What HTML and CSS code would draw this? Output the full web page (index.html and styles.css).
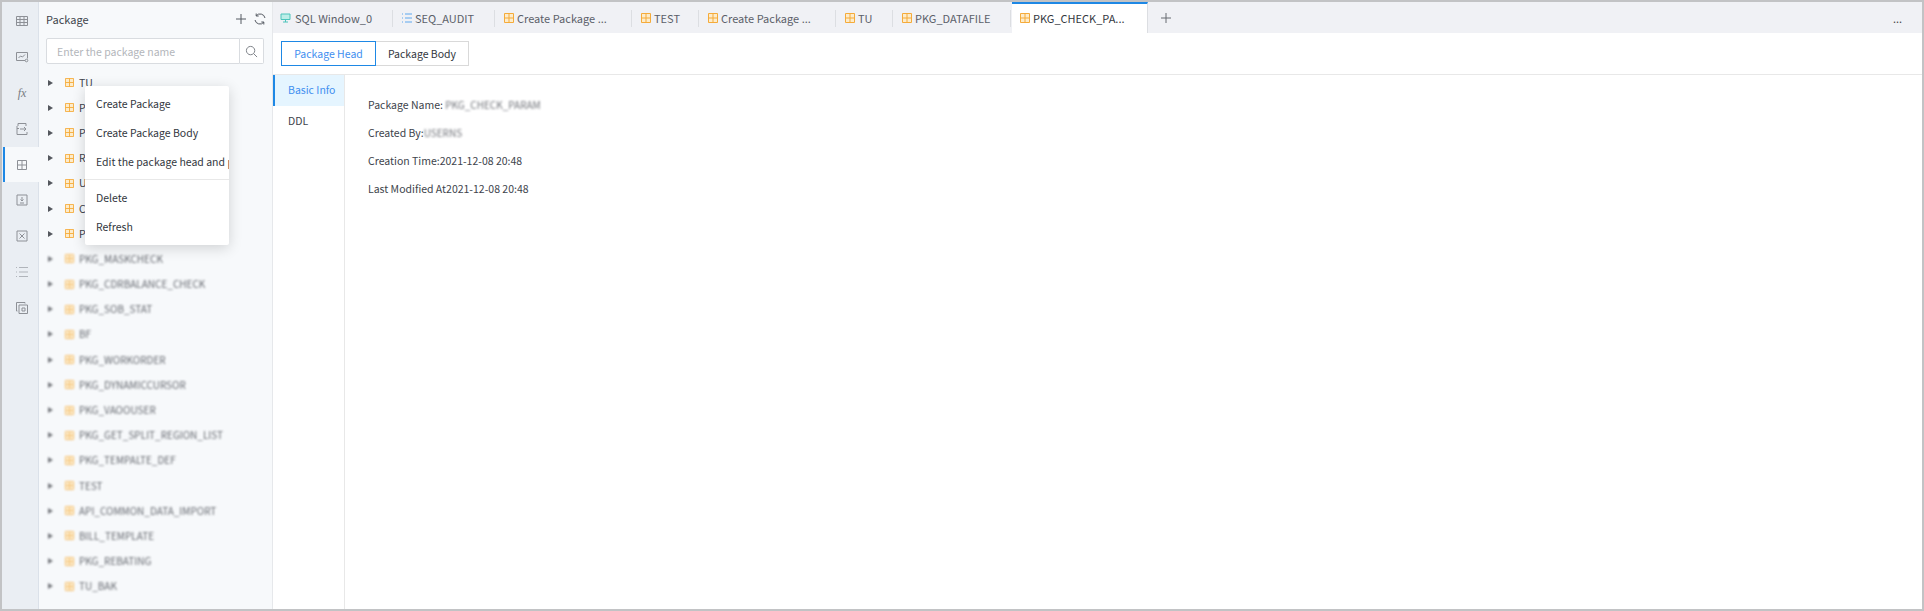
FILE: index.html
```html
<!DOCTYPE html>
<html lang="en">
<head>
<meta charset="utf-8">
<title>Package</title>
<link rel="stylesheet" href="styles.css">
</head>
<body>
<svg class="defs" width="0" height="0">
  <symbol id="pkg" viewBox="0 0 10 10"><path d="M.5.5h9v9h-9zM5 .5v9M.5 5h9" fill="#fdeccb" stroke="#f5ab3a" stroke-width="1"/></symbol>
</svg>
<div class="app">
  <nav class="rail">
    <div class="rail-item"><svg viewBox="0 0 14 14"><path d="M1.500 2.500h11v9h-11zM1.500 5.500h11M1.500 8.500h11M5 2.500v9M9 2.500v9"/></svg></div>
    <div class="rail-item"><svg viewBox="0 0 14 14"><path d="M10 10.500H1.500v-8h11v6M3.500 8l2-2 2 1 2.500-2.500"/><circle cx="11.500" cy="10.500" r="1.300"/></svg></div>
    <div class="rail-item"><span class="fx">fx</span></div>
    <div class="rail-item"><svg viewBox="0 0 14 14"><path d="M3 4V1.500h8V4M2 4v8.500h10v-2.500M2 6.500h2M5 7h6M9 5l2 2-2 2"/></svg></div>
    <div class="rail-item active"><svg viewBox="0 0 14 14"><path d="M2.500 2.500h9v9h-9zM7 2.500v9M2.500 7h9"/></svg></div>
    <div class="rail-item"><svg viewBox="0 0 14 14"><path d="M2 2h10v10H2zM7 4v4M5.500 6.500 7 8l1.500-1.500M5 10h4"/></svg></div>
    <div class="rail-item"><svg viewBox="0 0 14 14"><path d="M2 2h10v10H2zM4.500 4.500l5 5M9.500 4.500l-5 5"/></svg></div>
    <div class="rail-item"><svg class="faint" viewBox="0 0 14 14"><path d="M1 2.500h1M1 7h1M1 11.500h1M4 2.500h9M4 7h9M4 11.500h9"/></svg></div>
    <div class="rail-item"><svg viewBox="0 0 14 14"><path d="M10 2.500V1.500H1.500V10h1M4 4h8.500v8.500H4zM7 7h3v3H7z"/></svg></div>
  </nav>

  <aside class="side">
    <header class="side-head">
      <span class="side-title">Package</span>
      <div class="side-tools">
        <svg viewBox="0 0 12 12"><path d="M6 1v10M1 6h10"/></svg>
        <svg viewBox="0 0 12 12"><path d="M11 5A5 5 0 0 0 2.200 2.800M1 7A5 5 0 0 0 9.800 9.200M2.200 .5v2.500h2.500M9.800 11.500V9H7.300"/></svg>
      </div>
    </header>
    <div class="search">
      <div class="search-input">Enter the package name</div>
      <button class="search-btn" type="button"><svg viewBox="0 0 14 14"><circle cx="6" cy="6" r="4.500"/><path d="m9.300 9.300 3.700 3.700"/></svg></button>
    </div>
    <ul class="tree">
      <li class="row"><i class="arrow"></i><svg class="pkg"><use href="#pkg"/></svg><span>TU</span></li>
      <li class="row"><i class="arrow"></i><svg class="pkg"><use href="#pkg"/></svg><span>PKG_DATAFILE</span></li>
      <li class="row"><i class="arrow"></i><svg class="pkg"><use href="#pkg"/></svg><span>PKG_CHECK_PARAM</span></li>
      <li class="row"><i class="arrow"></i><svg class="pkg"><use href="#pkg"/></svg><span>RPT_AUDIT</span></li>
      <li class="row"><i class="arrow"></i><svg class="pkg"><use href="#pkg"/></svg><span>UTIL_PKG</span></li>
      <li class="row"><i class="arrow"></i><svg class="pkg"><use href="#pkg"/></svg><span>CHECK_PKG</span></li>
      <li class="row"><i class="arrow"></i><svg class="pkg"><use href="#pkg"/></svg><span>PKG_TASK</span></li>
      <li class="row hazy"><i class="arrow"></i><svg class="pkg"><use href="#pkg"/></svg><span>PKG_MASKCHECK</span></li>
      <li class="row hazy"><i class="arrow"></i><svg class="pkg"><use href="#pkg"/></svg><span>PKG_CDRBALANCE_CHECK</span></li>
      <li class="row hazy"><i class="arrow"></i><svg class="pkg"><use href="#pkg"/></svg><span>PKG_SOB_STAT</span></li>
      <li class="row hazy"><i class="arrow"></i><svg class="pkg"><use href="#pkg"/></svg><span>BF</span></li>
      <li class="row hazy"><i class="arrow"></i><svg class="pkg"><use href="#pkg"/></svg><span>PKG_WORKORDER</span></li>
      <li class="row hazy"><i class="arrow"></i><svg class="pkg"><use href="#pkg"/></svg><span>PKG_DYNAMICCURSOR</span></li>
      <li class="row hazy"><i class="arrow"></i><svg class="pkg"><use href="#pkg"/></svg><span>PKG_VAOOUSER</span></li>
      <li class="row hazy"><i class="arrow"></i><svg class="pkg"><use href="#pkg"/></svg><span>PKG_GET_SPLIT_REGION_LIST</span></li>
      <li class="row hazy"><i class="arrow"></i><svg class="pkg"><use href="#pkg"/></svg><span>PKG_TEMPALTE_DEF</span></li>
      <li class="row hazy"><i class="arrow"></i><svg class="pkg"><use href="#pkg"/></svg><span>TEST</span></li>
      <li class="row hazy"><i class="arrow"></i><svg class="pkg"><use href="#pkg"/></svg><span>API_COMMON_DATA_IMPORT</span></li>
      <li class="row hazy"><i class="arrow"></i><svg class="pkg"><use href="#pkg"/></svg><span>BILL_TEMPLATE</span></li>
      <li class="row hazy"><i class="arrow"></i><svg class="pkg"><use href="#pkg"/></svg><span>PKG_REBATING</span></li>
      <li class="row hazy"><i class="arrow"></i><svg class="pkg"><use href="#pkg"/></svg><span>TU_BAK</span></li>
    </ul>
    <div class="menu">
      <div class="menu-item">Create Package</div>
      <div class="menu-item">Create Package Body</div>
      <div class="menu-item">Edit the package head and package body</div>
      <div class="menu-line"></div>
      <div class="menu-item">Delete</div>
      <div class="menu-item">Refresh</div>
    </div>
  </aside>

  <main class="main">
    <div class="tabs">
      <div class="tab w1"><svg class="tab-icon sql" viewBox="0 0 10 10"><path d="M.5 1h9v5.500h-9zM5 6.500V9M2.500 9h5" fill="#bdeee8" stroke="#4cc4bb"/></svg><span>SQL Window_0</span></div>
      <div class="tab w2"><svg class="tab-icon" viewBox="0 0 10 10"><path d="M0 1h1M0 5h1M0 9h1M3 1h7M3 5h7M3 9h7" fill="none" stroke="#5fa8ee"/></svg><span>SEQ_AUDIT</span></div>
      <div class="tab w3"><svg class="tab-icon"><use href="#pkg"/></svg><span>Create Package ...</span></div>
      <div class="tab w4"><svg class="tab-icon"><use href="#pkg"/></svg><span>TEST</span></div>
      <div class="tab w5"><svg class="tab-icon"><use href="#pkg"/></svg><span>Create Package ...</span></div>
      <div class="tab w6"><svg class="tab-icon"><use href="#pkg"/></svg><span>TU</span></div>
      <div class="tab w7"><svg class="tab-icon"><use href="#pkg"/></svg><span>PKG_DATAFILE</span></div>
      <div class="tab tab-active"><svg class="tab-icon"><use href="#pkg"/></svg><span>PKG_CHECK_PA...</span></div>
      <div class="tab-add"><svg viewBox="0 0 10 10"><path d="M5 0v10M0 5h10"/></svg></div>
      <div class="tab-more">...</div>
    </div>
    <div class="switch">
      <button class="seg seg-on" type="button">Package Head</button>
      <button class="seg" type="button">Package Body</button>
    </div>
    <div class="content">
      <div class="vtabs">
        <div class="vtab vtab-on">Basic Info</div>
        <div class="vtab">DDL</div>
      </div>
      <div class="details">
        <p>Package Name: <span class="hazy">PKG_CHECK_PARAM</span></p>
        <p>Created By:<span class="hazy">USERNS</span></p>
        <p>Creation Time:2021-12-08 20:48</p>
        <p>Last Modified At2021-12-08 20:48</p>
      </div>
    </div>
  </main>
</div>
</body>
</html>
```
FILE: styles.css
```css
* { box-sizing: border-box; }
html, body { margin: 0; height: 100%; overflow: hidden; }
body { font: 10.500px/18px "Noto Sans CJK SC", "Noto Sans", sans-serif; color: #40444c; }
.defs { position: absolute; }
.app { display: flex; height: 611px; border: 2px solid #c2c3c5; background: #fff; }

.rail { width: 37px; flex: none; background: #eaeef3; border-right: 1px solid #dbe1e9; padding-top: 1px; }
.rail-item { height: 36px; margin-right: -1px; display: flex; align-items: center; justify-content: center; border-left: 2px solid transparent; margin-left: 1px; }
.rail-item svg { width: 14px; height: 14px; fill: none; stroke: #8d9096; stroke-width: 1; }
.rail-item svg.faint { stroke: #b0b4ba; }
.rail-item.active { background: #f7f9fb; border-left-color: #1e88e5; height: 35px; }
.fx { font: italic 12px/14px "Liberation Serif", serif; color: #777b82; }

.side { width: 234px; flex: none; position: relative; background: #f7f9fb; border-right: 1px solid #e6e8eb; padding: 0 7px; overflow: hidden; }
.side-head { height: 36px; display: flex; align-items: center; justify-content: space-between; padding-bottom: 2px; }
.side-title { color: #40444c; font-size: 11px; line-height: 16px; }
.side-tools { display: flex; gap: 7px; margin-right: -1px; }
.side-tools svg { width: 12px; height: 12px; fill: none; stroke: #555a62; stroke-width: 1; }
.search { display: flex; height: 26px; width: 218px; }
.search-input { width: 194px; padding-left: 10px; line-height: 25px; color: #b3b6bb; background: #fff; border: 1px solid #d9dce0; border-radius: 2px 0 0 2px; }
.search-btn { width: 24px; padding: 0; background: #fff; border: 1px solid #d9dce0; border-left: 0; border-radius: 0 2px 2px 0; display: flex; align-items: center; justify-content: center; }
.search-btn svg { width: 13px; height: 13px; fill: none; stroke: #777b82; stroke-width: 1; }

.tree { list-style: none; margin: 6px 0 0; padding: 0; }
.row { height: 25.2px; display: flex; align-items: center; }
.arrow { width: 0; height: 0; margin-left: 2px; border-left: 5px solid #55585e; border-top: 3.500px solid transparent; border-bottom: 3.500px solid transparent; }
.pkg { width: 9px; height: 9px; margin-left: 12px; margin-right: 4px; flex: none; overflow: visible; }
.row span { margin-left: 1px; white-space: nowrap; color: #40444c; }
.row.hazy { filter: blur(1.1px); opacity: .8; }
.row.hazy span { font-size: 10px; }
span.hazy { filter: blur(1.1px); opacity: .75; display: inline-block; font-size: 10px; }

.menu { position: absolute; left: 46px; top: 84px; width: 144px; height: 159px; padding-top: 3px; background: #fff; border-radius: 2px; box-shadow: 0 3px 14px rgba(0, 0, 0, .16); overflow: hidden; white-space: nowrap; color: #33373e; }
.menu-item { height: 29px; line-height: 29px; padding-left: 11px; }
.menu-line { height: 1px; margin: 3px 0 3px; background: #e8e8e8; }

.main { flex: 1; min-width: 0; display: flex; flex-direction: column; }
.tabs { height: 31px; flex: none; display: flex; align-items: center; background: #f0f1f5; color: #5b6069; font-size: 11px; }
.tab { height: 31px; display: flex; align-items: center; padding-left: 8px; position: relative; flex: none; white-space: nowrap; }
.tab::after { content: ""; position: absolute; right: 1px; top: 8px; height: 17px; width: 1px; background: #dcdee2; }
.tab-icon { width: 10px; height: 10px; margin-right: 3px; flex: none; }
.tab-icon.sql { width: 11px; margin-right: 4px; margin-left: -1px; }
.w1 { width: 121px; } .w2 { width: 102px; } .w3 { width: 137px; } .w4 { width: 67px; }
.w5 { width: 137px; } .w6 { width: 57px; } .w7 { width: 118px; }
.tab-active { width: 136px; background: #fff; color: #33373e; border-top: 2px solid #1e88e5; border-right: 1px solid #dcdee2; padding-bottom: 2px; }
.tab-active::after { display: none; }
.tab-add { width: 36px; display: flex; justify-content: center; }
.tab-add svg { width: 10px; height: 10px; fill: none; stroke: #666a71; stroke-width: 1; }
.tab-more { margin-left: auto; width: 29px; color: #444; font-size: 11px; line-height: 14px; }

.switch { height: 42px; flex: none; display: flex; align-items: flex-start; padding: 8px 0 0 8px; border-bottom: 1px solid #e8e8e8; }
.seg { height: 25px; padding: 0; font: inherit; line-height: 22px; background: #fff; color: #33373e; border: 1px solid #d9d9d9; border-left: 0; width: 93px; }
.seg-on { width: 95px; border: 1px solid #1e88e5; color: #3f8ff0; }

.content { flex: 1; display: flex; min-height: 0; }
.vtabs { width: 72px; flex: none; border-right: 1px solid #e8e8e8; }
.vtab { height: 31px; padding-left: 15px; line-height: 30px; color: #40444c; }
.vtab-on { background: #e5f5ff; color: #3f8ff0; border-left: 2px solid #1e88e5; padding-left: 13px; }
.details { padding: 21px 0 0 23px; }
.details p { margin: 0 0 10px; height: 18px; white-space: nowrap; }
```
